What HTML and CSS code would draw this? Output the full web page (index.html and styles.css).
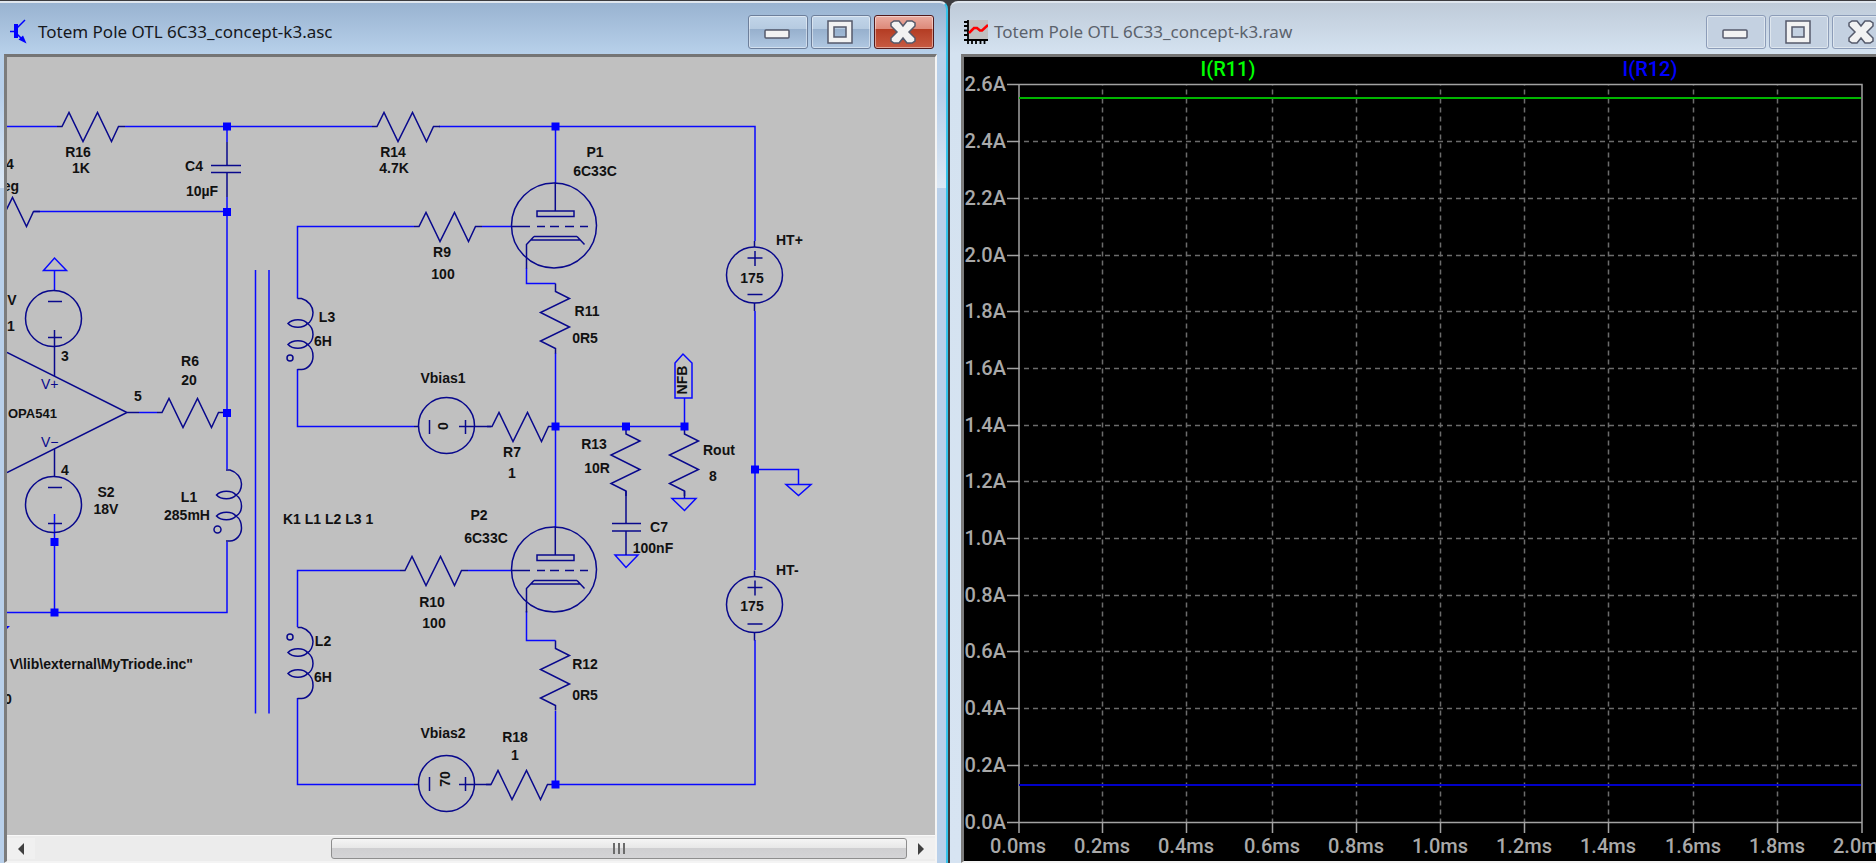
FILE: index.html
```html
<!DOCTYPE html>
<html lang="en">
<head>
  <meta charset="UTF-8">
  <meta name="viewport" content="width=device-width, initial-scale=1.0">
  <title>Totem Pole OTL 6C33</title>
  <link rel="stylesheet" href="styles.css">
</head>
<body>
  <div class="window active">
    <div class="titlebar">
      <svg class="icon" width="24" height="26" viewBox="0 0 24 26">
        <path d="M1 12.500H7M8 9L16 1M8 15L14 21" stroke="#00f" stroke-width="1.500" fill="none"/>
        <rect x="5" y="5" width="4" height="14" fill="#00f"/>
        <path d="M17.500 24.500L9.500 20.500L14 16.500Z" fill="#00f"/>
      </svg>
      <h1 class="title">Totem Pole OTL 6C33_concept-k3.asc</h1>
      <button class="btn" aria-label="Minimize"><svg width="58" height="32" viewBox="1 1 58 32"><rect class="glyph" x="17" y="15" width="24" height="8" rx="1"/></svg></button>
      <button class="btn" aria-label="Maximize"><svg width="58" height="32" viewBox="1 1 58 32"><path class="glyph" fill-rule="evenodd" d="M17 6H41V28H17ZM23 12V22H35V12Z"/></svg></button>
      <button class="btn close" aria-label="Close"><svg width="58" height="32" viewBox="1 1 58 32"><path class="glyph" d="M17 8L20 6H25L29 11L33 6H38L41 8V11L35 17L41 23V26L38 28H33L29 23L25 28H20L17 26V23L23 17L17 11Z"/></svg></button>
    </div>
    <div class="client schematic">
      <div class="canvas">
        <svg width="928" height="778" viewBox="7 57 928 778">
          <defs>
            <path id="res" d="M-5 0H0L7 -14L21 15L35.500 -14L49.500 15L56.500 0H63"/>
            <path id="resv" d="M0 -8V0L14 7L-15 21L14 35.500L-15 49.500L0 57V62"/>
            <g id="coil">
              <path d="M0 0H4C11 2 15.500 8 15.500 14C15.500 19 13 24 10 25C13 27 15.500 31 15.500 36C15.500 41 13 45 10 46C13 48 15.500 52 15.500 58C15.500 65 10 71 4 71H0"/>
              <path d="M-9.500 25C-5 20 6 20 10 25C6 30 -5 30 -9.500 25ZM-9.500 46C-5 41 6 41 10 46C6 51 -5 51 -9.500 46Z"/>
            </g>
            <g id="tube">
              <circle cx="0" cy="0" r="42.500"/>
              <path d="M1.300 -43V-14.500M-17 -14.500H20V-9H-17ZM-42 1H-24M-17 1H-9M-4 1H5M11 1H20M26 1H34"/>
              <path d="M-20 11H23M-23 14.500H26M-20 11L-27.500 19V43M23 11L30.500 19"/>
            </g>
            <g id="source">
              <circle cx="0" cy="0" r="28"/>
              <path d="M0 -34V-28M0 28V36M-7 -17H8M.500 -24V-9M-7 19.500H8"/>
            </g>
          </defs>

          <!-- wires -->
          <g class="wire">
            <path d="M7 126.500H57M125 126.500H372M439 126.500H755V241M755 311V570M755 640V784.500H555"/>
            <path d="M227 126.500V142M227 197V469M227 542V612.500H7M34 211.500H227M54.500 514V612.500"/>
            <path d="M255.500 270V713.500M269 270V713.500"/>
            <path d="M297.500 298.500V226.500H414M482 226.500H512M297.500 369V426.500H414M297.500 627V570.500H400M468 570.500H512M297.500 698V784.500H414"/>
            <path d="M555.500 126.500V183M526.500 268V283.500H555.500M526.500 611V640.500H555.500M555.500 353V527M555.500 711V784.500"/>
            <path d="M555.500 426.500H684.500V398M675 398V363L683 354L692 363V398ZM139 412.500H157"/>
            <path d="M755 469.500H798.500V484.500M786 484.500H811L798.500 495.500ZM672 498.500H696L684.500 510.500ZM615 555H638L626 567.500ZM54.500 291V270M43.500 270.500H66.500L54.500 258Z"/>
          </g>
          <path class="node" d="M7 626H10L7 629Z"/>

          <!-- parts -->
          <g class="part">
            <use href="#res" x="62" y="126.500"/>
            <use href="#res" x="377" y="126.500"/>
            <use href="#res" x="-23" y="211.500"/>
            <use href="#res" x="419" y="226.500"/>
            <use href="#res" x="162" y="412.500"/>
            <use href="#res" x="492" y="426.500"/>
            <use href="#res" x="405" y="570.500"/>
            <use href="#res" x="491" y="784.500"/>
            <use href="#resv" x="555.500" y="291.500"/>
            <use href="#resv" x="555.500" y="648.500"/>
            <use href="#resv" x="626" y="434"/>
            <use href="#resv" x="684.500" y="434"/>
            <use href="#coil" x="297.500" y="298.500"/>
            <use href="#coil" x="297.500" y="627.500"/>
            <use href="#coil" x="226" y="470"/>
            <circle cx="290" cy="358" r="3"/>
            <circle cx="290" cy="637" r="3"/>
            <circle cx="217.500" cy="529.500" r="3.500"/>
            <use href="#tube" x="554" y="225.500"/>
            <use href="#tube" x="554" y="569.500"/>
            <use href="#source" x="754.500" y="275"/>
            <use href="#source" x="754.500" y="604.500"/>
            <path d="M227 142V165.500M211 165.500H241M211 172.500H241M227 172.500V197M626 491V523.500M612 523.500H641M612 531H641M626 531V555M684.500 491V498"/>
            <circle cx="53.500" cy="318.500" r="28"/>
            <path d="M48 301.500H62M48 337.500H62M54.500 330V376"/>
            <circle cx="53.500" cy="504.500" r="28"/>
            <path d="M54.500 449V477M48 487.500H62M48 523.500H62"/>
            <path d="M7 352.500L127 412.500L7 472.500M127 412.500H139"/>
            <circle cx="446.500" cy="425.500" r="28"/>
            <path d="M414 426.500H419M429.500 420V434M465.500 420V434M459 426.500H491"/>
            <circle cx="446.500" cy="783.500" r="28"/>
            <path d="M414 784.500H419M429.500 777V791M465.500 777V791M459 784.500H491"/>
          </g>

          <!-- junctions -->
          <path class="node" d="M223 122.500h8v8h-8zM223 208h8v8h-8zM223 409h8v8h-8zM551.500 122.500h8v8h-8zM551.500 422.500h8v8h-8zM622 422.500h8v8h-8zM680.500 422.500h8v8h-8zM551.500 780.500h8v8h-8zM751 465.500h8v8h-8zM50.500 538h8v8h-8zM50.500 608.500h8v8h-8z"/>

          <g class="label mid">
            <text x="78" y="157">R16</text>
            <text x="81" y="173">1K</text>
            <text x="10" y="169">4</text>
            <text x="194" y="171">C4</text>
            <text x="202" y="196">10µF</text>
            <text x="393" y="157">R14</text>
            <text x="394" y="173">4.7K</text>
            <text x="442" y="257">R9</text>
            <text x="443" y="279">100</text>
            <text x="12" y="305">V</text>
            <text x="11" y="331">1</text>
            <text x="595" y="157">P1</text>
            <text x="595" y="176">6C33C</text>
            <text x="752" y="283">175</text>
            <text x="65" y="361">3</text>
            <text x="138" y="401">5</text>
            <text x="65" y="475">4</text>
            <text x="190" y="366">R6</text>
            <text x="189" y="385">20</text>
            <text x="106" y="497">S2</text>
            <text x="106" y="514">18V</text>
            <text x="189" y="502">L1</text>
            <text x="187" y="520">285mH</text>
            <text x="327" y="322">L3</text>
            <text x="323" y="346">6H</text>
            <text x="443" y="383">Vbias1</text>
            <text x="587" y="316">R11</text>
            <text x="585" y="343">0R5</text>
            <text x="512" y="457">R7</text>
            <text x="512" y="478">1</text>
            <text x="594" y="449">R13</text>
            <text x="597" y="473">10R</text>
            <text x="713" y="481">8</text>
            <text x="479" y="520">P2</text>
            <text x="486" y="543">6C33C</text>
            <text x="659" y="532">C7</text>
            <text x="653" y="553">100nF</text>
            <text x="752" y="611">175</text>
            <text x="432" y="607">R10</text>
            <text x="434" y="628">100</text>
            <text x="323" y="646">L2</text>
            <text x="323" y="682">6H</text>
            <text x="8" y="704">0</text>
            <text x="443" y="738">Vbias2</text>
            <text x="585" y="669">R12</text>
            <text x="585" y="700">0R5</text>
            <text x="515" y="742">R18</text>
            <text x="515" y="760">1</text>
            <text transform="translate(448 426) rotate(-90)">0</text>
            <text transform="translate(450 779) rotate(-90)">70</text>
            <text transform="translate(687 380) rotate(-90)">NFB</text>
          </g>
          <g class="label">
            <text x="776" y="245">HT+</text>
            <text x="776" y="575">HT-</text>
            <text x="703" y="455">Rout</text>
            <text x="283" y="524">K1 L1 L2 L3 1</text>
            <text class="name" x="8" y="418">OPA541</text>
          </g>
          <g class="label end">
            <text x="19" y="191">eg</text>
            <text x="193" y="669">V\lib\external\MyTriode.inc"</text>
          </g>
          <g class="pin">
            <text x="41" y="389">V+</text>
            <text x="41" y="447">V−</text>
          </g>
        </svg>
      </div>
      <div class="scrollbar">
        <button class="arrow" aria-label="Scroll left"><svg width="8" height="12" viewBox="0 0 8 12"><path d="M7 0V12L1 6Z"/></svg></button>
        <div class="track">
          <div class="thumb"><i></i><i></i><i></i></div>
        </div>
        <button class="arrow" aria-label="Scroll right"><svg width="8" height="12" viewBox="0 0 8 12"><path d="M1 0V12L7 6Z"/></svg></button>
      </div>
    </div>
  </div>

  <div class="window inactive">
    <div class="titlebar">
      <svg class="icon" width="24" height="24" viewBox="0 0 24 24">
        <rect x="4" y="0" width="20" height="20" fill="#c0c0c0"/>
        <path d="M4 0V24M0 20H24M0 2H4M0 6H4M0 10.500H4M0 15H4M8 20V24M12 20V24M16.500 20V24M20.500 20V24" stroke="#000" stroke-width="1.800" fill="none"/>
        <path d="M5 13L10 8H13L16 10.500H18L24 5" stroke="#f00" stroke-width="2.500" fill="none"/>
      </svg>
      <h1 class="title">Totem Pole OTL 6C33_concept-k3.raw</h1>
      <button class="btn" aria-label="Minimize"><svg width="58" height="32" viewBox="1 1 58 32"><rect class="glyph" x="17" y="15" width="24" height="8" rx="1"/></svg></button>
      <button class="btn" aria-label="Maximize"><svg width="58" height="32" viewBox="1 1 58 32"><path class="glyph" fill-rule="evenodd" d="M17 6H41V28H17ZM23 12V22H35V12Z"/></svg></button>
      <button class="btn close" aria-label="Close"><svg width="58" height="32" viewBox="1 1 58 32"><path class="glyph" d="M17 8L20 6H25L29 11L33 6H38L41 8V11L35 17L41 23V26L38 28H33L29 23L25 28H20L17 26V23L23 17L17 11Z"/></svg></button>
    </div>
    <div class="client plot">
      <svg width="928" height="804" viewBox="964 57 928 804">
        <path class="grid" d="M1102.500 84.500V822M1186.500 84.500V822M1272.500 84.500V822M1356.500 84.500V822M1440.500 84.500V822M1524.500 84.500V822M1608.500 84.500V822M1693.500 84.500V822M1777.500 84.500V822"/>
        <path class="grid" d="M1019 141.500H1861M1019 198.500H1861M1019 255.500H1861M1019 311.500H1861M1019 368.500H1861M1019 425.500H1861M1019 481.500H1861M1019 538.500H1861M1019 595.500H1861M1019 651.500H1861M1019 708.500H1861M1019 765.500H1861"/>
        <path class="axis" d="M1007 84.500H1862V833M1019 84.500V833M1007 822.500H1862"/>
        <path class="axis" d="M1007 141.500H1019M1007 198.500H1019M1007 255.500H1019M1007 311.500H1019M1007 368.500H1019M1007 425.500H1019M1007 481.500H1019M1007 538.500H1019M1007 595.500H1019M1007 651.500H1019M1007 708.500H1019M1007 765.500H1019"/>
        <path class="axis" d="M1102.500 822V833M1186.500 822V833M1272.500 822V833M1356.500 822V833M1440.500 822V833M1524.500 822V833M1608.500 822V833M1693.500 822V833M1777.500 822V833"/>
        <path class="trace-r11" d="M1019 98H1861"/>
        <path class="trace-r12" d="M1019 785H1861"/>
        <g class="tick end">
          <text x="1006" y="91">2.6A</text>
          <text x="1006" y="148">2.4A</text>
          <text x="1006" y="205">2.2A</text>
          <text x="1006" y="262">2.0A</text>
          <text x="1006" y="318">1.8A</text>
          <text x="1006" y="375">1.6A</text>
          <text x="1006" y="432">1.4A</text>
          <text x="1006" y="488">1.2A</text>
          <text x="1006" y="545">1.0A</text>
          <text x="1006" y="602">0.8A</text>
          <text x="1006" y="658">0.6A</text>
          <text x="1006" y="715">0.4A</text>
          <text x="1006" y="772">0.2A</text>
          <text x="1006" y="829">0.0A</text>
        </g>
        <g class="tick mid">
          <text x="1018" y="853">0.0ms</text>
          <text x="1102" y="853">0.2ms</text>
          <text x="1186" y="853">0.4ms</text>
          <text x="1272" y="853">0.6ms</text>
          <text x="1356" y="853">0.8ms</text>
          <text x="1440" y="853">1.0ms</text>
          <text x="1524" y="853">1.2ms</text>
          <text x="1608" y="853">1.4ms</text>
          <text x="1693" y="853">1.6ms</text>
          <text x="1777" y="853">1.8ms</text>
          <text x="1861" y="853">2.0ms</text>
          <text class="r11" x="1228" y="76">I(R11)</text>
          <text class="r12" x="1650" y="76">I(R12)</text>
        </g>
      </svg>
    </div>
  </div>
</body>
</html>
```
FILE: styles.css
```css
*{
  margin: 0;
  padding: 0;
  box-sizing: border-box;
}
body{
  display: flex;
  gap: 2px;
  height: 100vh;
  padding-top: 1px;
  overflow: hidden;
  background: #3c3c40;
}
svg{
  display: block;
}
.window{
  display: flex;
  flex-direction: column;
  border-top: 2px solid #dfe6ee;
  border-radius: 8px 8px 0 0;
}
.active{
  flex: 0 0 calc(50% + 10px);
  padding: 0 9px 0 4px;
  border-right: 2px solid #35c3ea;
  border-top-left-radius: 0;
  background: linear-gradient(#99b3d1 0, #b7d0ea 50px, #b7cfea 90px, #dce8f5 185px, #b9d0ea 185px);
}
.inactive{
  flex: 0 0 calc(50% + 16px);
  padding: 0 9px 0 11px;
  background: linear-gradient(#bfcbd9 0, #d4e2f0 50px, #d7e4f2 100%);
}
.titlebar{
  display: flex;
  align-items: center;
  gap: 3px;
  height: 51px;
  padding: 7px 3px 0 5px;
}
.inactive .titlebar{
  padding-left: 3px;
}
.icon{
  flex: none;
}
.title{
  flex: 1;
  margin-left: 2px;
  font: 17px/24px "Noto Sans", sans-serif;
  white-space: nowrap;
  color: #16181c;
}
.inactive .title{
  margin-left: 3px;
  color: #5b626c;
}

/* caption buttons */
.btn{
  flex: none;
  width: 60px;
  height: 34px;
  border: 1px solid #6d7f9b;
  border-radius: 3px;
  box-shadow: inset 0 0 0 1px rgba(255,255,255,.45);
  background: linear-gradient(#c2d5e9 0, #b5cae0 42%, #97b0cd 42%, #b0c8e2 100%);
}
.active .close{
  border-color: #521a1c;
  background: linear-gradient(#eaaba0 0, #dc8878 42%, #b43d24 42%, #c75a42 100%);
}
.inactive .btn{
  border-color: #8c9cb8;
  background: #c4d1e1;
}
.glyph{
  fill: #f2f2f2;
  stroke: #555a6b;
  stroke-width: 1.5;
}

.client{
  flex: 1;
  min-height: 0;
  overflow: hidden;
  border: solid;
  border-width: 3px 2px 2px 3px;
  border-color: #757575 #f4f4f4 #f4f4f4 #7c7c7c;
}
.schematic{
  display: flex;
  flex-direction: column;
  background: #c0c0c0;
}
.canvas{
  flex: 1;
  min-height: 0;
  overflow: hidden;
}
.wire, .part{
  fill: none;
  stroke: #0808ff;
  stroke-width: 1.5;
}
.part{
  stroke: #08088c;
}
.node{
  fill: #00f;
}
.label{
  font: bold 14px "Liberation Sans", Arial, sans-serif;
  fill: #111;
}
.name{
  font-size: 13px;
}
.pin{
  font: 14px "Liberation Sans", Arial, sans-serif;
  fill: #08088c;
}
.mid{
  text-anchor: middle;
}
.end{
  text-anchor: end;
}

/* horizontal scrollbar */
.scrollbar{
  display: flex;
  height: 26px;
  padding: 2px 0;
  background: #ececec;
  border-top: 1px solid #f8f8f8;
}
.arrow{
  display: flex;
  align-items: center;
  justify-content: center;
  width: 28px;
  border: 0;
  background: #f0f0f0;
}
.arrow path{
  fill: #404040;
}
.track{
  flex: 1;
  display: flex;
  justify-content: flex-end;
}
.thumb{
  display: flex;
  align-items: center;
  justify-content: center;
  gap: 3px;
  width: 66%;
  border: 1px solid #8e8e8e;
  border-radius: 3px;
  background: linear-gradient(#f5f5f5 0, #e8e8e8 45%, #cfcfd1 50%, #d4d4d6 100%);
}
.thumb i{
  width: 2px;
  height: 11px;
  background: #6b6b6b;
}

/* waveform pane */
.plot{
  background: #000;
}
.grid, .axis, .trace-r11, .trace-r12{
  fill: none;
  stroke: #6c6c6c;
  stroke-width: 1.5;
}
.grid{
  stroke-dasharray: 5 4;
  stroke-dashoffset: 4;
}
.axis{
  stroke: #a2a2a2;
}
.trace-r11{
  stroke: #00b400;
  stroke-width: 2;
}
.trace-r12{
  stroke: #0000c8;
  stroke-width: 2;
}
.tick{
  font: 500 20px Roboto, sans-serif;
  fill: #a9a9a9;
}
.r11{
  fill: #0f0;
}
.r12{
  fill: #00f;
}
```
